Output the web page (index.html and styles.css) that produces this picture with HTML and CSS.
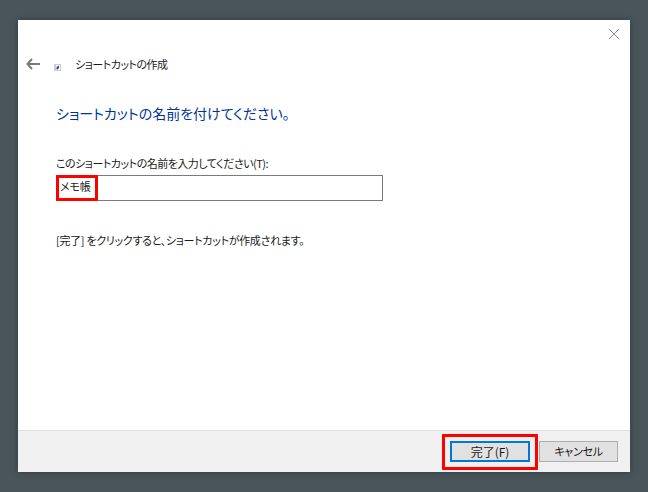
FILE: index.html
```html
<!DOCTYPE html>
<html lang="ja">
<head>
<meta charset="utf-8">
<title>ショートカットの作成</title>
<link rel="stylesheet" href="styles.css">
</head>
<body>
<div class="dialog">
  <svg class="close" width="12" height="12" viewBox="0 0 12 12"><path d="M1 1L11 11M11 1L1 11" stroke="#8a8a8a" stroke-width="1" fill="none"/></svg>
  <div class="main">
    <div class="titlebar">
      <svg class="back" width="14" height="12" viewBox="0 0 14 12"><path d="M6 1L1.5 6L6 11M2 6H14" stroke="#7a7a7a" stroke-width="2" fill="none"/></svg>
      <svg class="appicon" width="7" height="7" viewBox="0 0 7 7"><rect width="7" height="7" fill="#c9ced6"/><rect x="2" y="1" width="4" height="5" fill="#fff"/><path d="M2.5 5.5V3L5 1.5V4L3.5 5.5Z" fill="#1c4fb0"/></svg>
      <span class="title">ショートカットの作成</span>
    </div>
    <h1 class="heading">ショートカットの名前を付けてください。</h1>
    <label class="label">このショートカットの名前を入力してください(T):</label>
    <div class="input"><span class="mark">メモ帳</span></div>
    <p class="hint">[完了] をクリックすると、ショートカットが作成されます。</p>
  </div>
  <div class="footer">
    <div class="finish-mark"><button class="btn primary">完了(F)</button></div>
    <button class="btn cancel">キャンセル</button>
  </div>
</div>
</body>
</html>
```
FILE: styles.css
```css
html, body { margin: 0; height: 100%; }
body {
  background: #4a555b;
  font-family: "Noto Sans CJK JP", "Noto Sans", sans-serif;
  font-feature-settings: "palt";
  color: #1a1a1a;
  overflow: hidden;
}
.dialog {
  position: relative;
  display: flex;
  flex-direction: column;
  width: 612px;
  height: 452px;
  margin: 20px 0 0 18px;
  background: #fff;
  box-shadow: 0 0 6px rgba(30, 36, 40, 0.55);
}
.close { position: absolute; top: 8px; right: 10px; }
.main { flex: 1; padding-left: 8px; }
.titlebar {
  display: flex;
  align-items: center;
  height: 14px;
  margin-top: 37px;
}
.back { margin-right: 14px; margin-top: -1px; }
.appicon { margin: 7px 14px 0 0; }
.title { font-size: 11px; letter-spacing: -0.5px; line-height: 14px; white-space: nowrap; }
.heading {
  margin: 32px 0 0 30px;
  font-size: 14px;
  font-weight: 400;
  line-height: 20px;
  color: #003399;
  white-space: nowrap;
}
.label {
  display: block;
  margin: 33px 0 0 30px;
  font-size: 11px;
  letter-spacing: -0.5px;
  line-height: 14px;
  white-space: nowrap;
}
.input {
  display: flex;
  box-sizing: border-box;
  width: 327px;
  height: 26px;
  margin: 5px 0 0 30px;
  border: 1px solid #7a7a7a;
}
.mark {
  box-sizing: border-box;
  display: block;
  width: 42px;
  height: 26px;
  margin: -1px 0 0 -1px;
  padding: 1px 0 0 1px;
  border: 3px solid #f00;
  border-radius: 1px;
  font-size: 11px;
  letter-spacing: -0.2px;
  line-height: 14px;
  white-space: nowrap;
}
.hint {
  margin: 32px 0 0 30px;
  font-size: 11px;
  letter-spacing: -0.3px;
  line-height: 14px;
  white-space: nowrap;
}
.footer {
  display: flex;
  align-items: center;
  justify-content: flex-end;
  height: 41px;
  padding-right: 12px;
  background: #f0f0f0;
  border-top: 1px solid #dfdfdf;
}
.finish-mark {
  box-sizing: border-box;
  display: flex;
  align-items: center;
  justify-content: center;
  width: 96px;
  height: 36px;
  margin-right: 1px;
  border: 3px solid #f00;
  border-radius: 1px;
}
.btn {
  box-sizing: border-box;
  width: 80px;
  height: 21px;
  padding: 0;
  background: #e1e1e1;
  border: 1px solid #adadad;
  font: inherit;
  font-size: 12px;
  line-height: 17px;
  color: #1a1a1a;
}
.btn.cancel { width: 79px; font-size: 11px; letter-spacing: -0.3px; }
.btn.primary { border: 2px solid #0078d7; }
```
